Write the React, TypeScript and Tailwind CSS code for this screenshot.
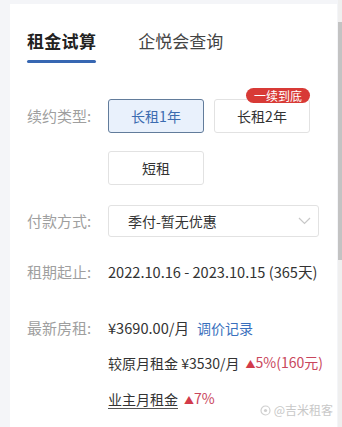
import React from "react";

const font = { fontFamily: '"Noto Sans CJK SC", "Noto Sans", sans-serif' };

function Label({ children }: { children: React.ReactNode }) {
  return (
    <div className="w-[81px] shrink-0 text-[15px] leading-[22px] text-[#9f9f9f]">
      {children}
    </div>
  );
}

export default function App() {
  return (
    <div
      className="flex h-[427px] w-[342px] overflow-hidden bg-[#f4f5f8]"
      style={font}
    >
      <div className="relative ml-[10px] mt-[4px] w-[327px] shrink-0 bg-white pl-[17px]">
        {/* Tabs */}
        <div className="flex gap-[42px] pt-[25px]">
          <div className="flex flex-col">
            <div className="text-[17px] font-bold leading-[24px] text-[#222] tracking-[0.3px]">
              租金试算
            </div>
            <div className="mt-[7px] h-[3px] w-[69px] rounded-full bg-[#3767b2]" />
          </div>
          <div className="text-[17px] leading-[24px] text-[#444]">企悦会查询</div>
        </div>

        {/* 续约类型 */}
        <div className="mt-[36px] flex">
          <div className="flex h-[34px] items-center">
            <Label>续约类型:</Label>
          </div>
          <div className="flex flex-col gap-[18px]">
            <div className="flex gap-[10px]">
              <div className="flex h-[34px] w-[96px] items-center justify-center rounded-[3px] border border-[#627c9b] bg-[#e9f1fc] text-[14px] text-[#3c6cb0]">
                长租1年
              </div>
              <div className="relative flex h-[34px] w-[96px] items-center justify-center rounded-[3px] border border-[#e2e2e2] bg-white text-[14px] text-[#333]">
                长租2年
                <div className="absolute right-[-1px] top-[-12px] flex h-[15px] items-center rounded-full bg-[#d83a36] px-[8px] text-[12px] leading-none text-white">
                  一续到底
                </div>
              </div>
            </div>
            <div className="flex h-[34px] w-[96px] items-center justify-center rounded-[3px] border border-[#e2e2e2] bg-white text-[14px] text-[#333]">
              短租
            </div>
          </div>
        </div>

        {/* 付款方式 */}
        <div className="mt-[20px] flex items-center">
          <Label>付款方式:</Label>
          <div className="flex h-[32px] w-[211px] items-center justify-between rounded-[3px] border border-[#e2e2e2] pl-[19px] pr-[7px]">
            <span className="text-[14px] text-[#333]">季付-暂无优惠</span>
            <svg width="13" height="8" viewBox="0 0 13 8" fill="none">
              <path d="M1 1l5.5 5.5L12 1" stroke="#c8c8c8" strokeWidth="1.2" />
            </svg>
          </div>
        </div>

        {/* 租期起止 */}
        <div className="mt-[24px] flex items-center">
          <Label>租期起止:</Label>
          <div className="text-[14.6px] leading-[22px] text-[#333]">
            2022.10.16 - 2023.10.15 (365天)
          </div>
        </div>

        {/* 最新房租 */}
        <div className="mt-[34px] flex">
          <Label>最新房租:</Label>
          <div className="flex flex-col gap-[12px]">
            <div className="flex items-center text-[14.6px] leading-[22px]">
              <span className="text-[#333]">¥3690.00/月</span>
              <span className="ml-[8px] text-[14px] text-[#3a70bd]">调价记录</span>
            </div>
            <div className="flex items-center text-[14px] leading-[22px]">
              <span className="text-[#333]">较原月租金 ¥3530/月</span>
              <span className="ml-[6px] text-[#c9465c]">
                <span className="text-[10px] text-[#d23a4a]">▲</span>5%(160元)
              </span>
            </div>
            <div className="flex items-center text-[14px] leading-[22px]">
              <span className="text-[#333] underline underline-offset-[3px] decoration-[#555]">
                业主月租金
              </span>
              <span className="ml-[6px] text-[#c9465c]">
                <span className="text-[10px] text-[#d23a4a]">▲</span>7%
              </span>
            </div>
          </div>
        </div>

        {/* watermark overlay */}
        <div className="absolute right-[4px] top-[398px] flex items-center gap-[3px] text-[12px] leading-[16px] text-[#c8c8c8]">
          <svg width="11" height="11" viewBox="0 0 11 11">
            <circle cx="5.5" cy="5.5" r="4.5" fill="none" stroke="#cfcfcf" strokeWidth="1.2" />
            <circle cx="5.5" cy="5.5" r="1.6" fill="#cfcfcf" />
          </svg>
          <span>@吉米租客</span>
        </div>
      </div>

      {/* scrollbar */}
      <div className="ml-auto flex w-[4px] flex-col bg-[#efefef]">
        <div className="mt-[22px] h-[238px] bg-[#c3c3c3]" />
      </div>
    </div>
  );
}
